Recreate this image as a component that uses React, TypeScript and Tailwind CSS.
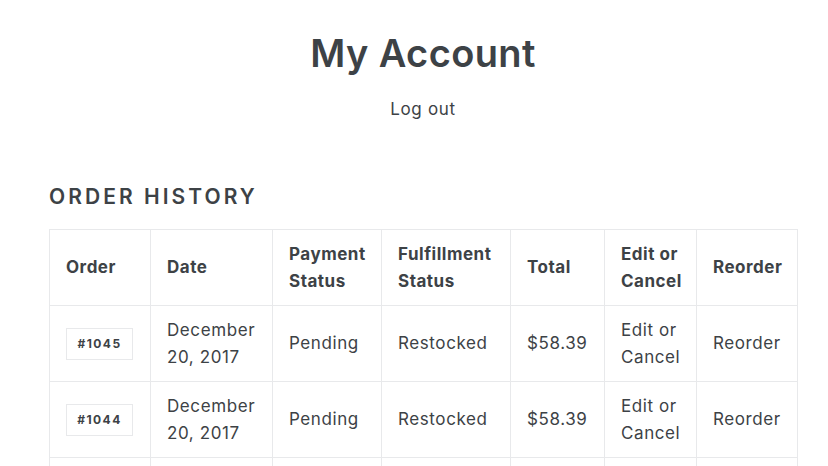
import React from "react";

type Order = {
  id: string;
  date: [string, string];
  payment: string;
  fulfillment: string;
  total: string;
};

const orders: Order[] = [
  { id: "#1045", date: ["December", "20, 2017"], payment: "Pending", fulfillment: "Restocked", total: "$58.39" },
  { id: "#1044", date: ["December", "20, 2017"], payment: "Pending", fulfillment: "Restocked", total: "$58.39" },
  { id: "#1043", date: ["December", "20, 2017"], payment: "Pending", fulfillment: "Restocked", total: "$58.39" },
];

const th = "border border-[#e8e9eb] px-[16px] text-left align-middle font-bold text-[17px] leading-[27px] tracking-[0.03em] h-[76px]";
const td = "border border-[#e8e9eb] px-[16px] text-left align-middle text-[17px] leading-[27px] tracking-[0.035em] h-[76px]";

export default function App() {
  return (
    <div
      className="min-h-screen bg-white text-[#3d4246] overflow-hidden"
      style={{ fontFamily: "Inter, 'Liberation Sans', sans-serif" }}
    >
      <div className="pl-[49px] w-[797px]">
        <header className="flex flex-col items-center pt-[30px]">
          <h1 className="text-[38px] leading-[46px] font-semibold tracking-[0.01em]">My Account</h1>
          <a className="mt-[20px] text-[17px] leading-[26px] tracking-[0.04em]" href="#">
            Log out
          </a>
        </header>

        <h2 className="mt-[61px] text-[21px] leading-[28px] font-semibold tracking-[0.145em] uppercase">
          Order History
        </h2>

        <table className="mt-[18px] w-[748px] table-fixed border-collapse">
          <colgroup>
            <col className="w-[101px]" />
            <col className="w-[122px]" />
            <col className="w-[109px]" />
            <col className="w-[129px]" />
            <col className="w-[94px]" />
            <col className="w-[92px]" />
            <col className="w-[101px]" />
          </colgroup>
          <thead>
            <tr>
              <th className={th}>Order</th>
              <th className={th}>Date</th>
              <th className={th}>Payment Status</th>
              <th className={th}>Fulfillment Status</th>
              <th className={th}>Total</th>
              <th className={th}>Edit or Cancel</th>
              <th className={th}>Reorder</th>
            </tr>
          </thead>
          <tbody>
            {orders.map((o) => (
              <tr key={o.id}>
                <td className={td}>
                  <a
                    href="#"
                    className="inline-flex items-center justify-center w-[67px] h-[32px] border border-[#e8e9eb] text-[12px] font-bold tracking-[0.12em]"
                  >
                    {o.id}
                  </a>
                </td>
                <td className={td}>
                  {o.date[0]}
                  <br />
                  {o.date[1]}
                </td>
                <td className={td}>{o.payment}</td>
                <td className={td}>{o.fulfillment}</td>
                <td className={td}>{o.total}</td>
                <td className={td}>
                  Edit or
                  <br />
                  Cancel
                </td>
                <td className={td}>Reorder</td>
              </tr>
            ))}
          </tbody>
        </table>
      </div>
    </div>
  );
}
